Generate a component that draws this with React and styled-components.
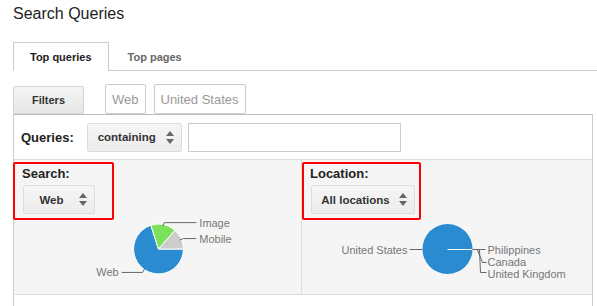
import React from 'react';
import styled, { createGlobalStyle } from 'styled-components';

const GlobalStyle = createGlobalStyle`
    body {
        margin: 0;
        background: #fff;
        font-family: "Liberation Sans", Arial, sans-serif;
        color: #222;
    }
`

function SelectArrows() {
    return (
        <svg width="8" height="13" viewBox="0 0 8 13">
            <polygon points="0,5 4,0 8,5" fill="#666" />
            <polygon points="0,8 8,8 4,13" fill="#666" />
        </svg>
    );
}

function Select({ text, width }) {
    return (
        <SelectBox $width={width}>
            <span>{text}</span>
            <SelectArrows />
        </SelectBox>
    );
}

function SearchPie() {
    // slices go clockwise from 3 o'clock: web (blue), image (green), mobile (gray)
    return (
        <Chart viewBox="0 0 288 74" height="74">
            <g stroke="#fff" strokeWidth="1">
                <path d="M145 29 L170 29 A25 25 0 1 1 137.3 5.2 Z" fill="#2a8bd0" />
                <path d="M145 29 L137.3 5.2 A25 25 0 0 1 161.5 10.3 Z" fill="#7be15b" />
                <path d="M145 29 L161.5 10.3 A25 25 0 0 1 170 29 Z" fill="#cccccc" />
            </g>
            <g stroke="#666" strokeWidth="1" fill="none">
                <polyline points="149,6 151,2.5 183,2.5" />
                <polyline points="166,20 170,18.5 183,18.5" />
                <polyline points="108,52.5 129,52.5 131,49" />
            </g>
            <g fill="#777" fontSize="11">
                <text x="186" y="6.5">Image</text>
                <text x="186" y="22.5">Mobile</text>
                <text x="105" y="56.5" textAnchor="end">Web</text>
            </g>
        </Chart>
    );
}

function LocationPie() {
    return (
        <Chart viewBox="0 0 289 74" height="74">
            <circle cx="145" cy="29" r="25" fill="#2a8bd0" />
            <line x1="145" y1="29.5" x2="170" y2="29.5" stroke="#fff" strokeWidth="1" />
            <g stroke="#666" strokeWidth="1" fill="none">
                <polyline points="107,29.5 120,29.5" />
                <polyline points="170,29.5 183,29.5" />
                <polyline points="175,30 180,42.5 184,42.5" />
                <polyline points="177,30 178,52.5 184,52.5" />
            </g>
            <g fill="#777" fontSize="11">
                <text x="105" y="33.5" textAnchor="end">United States</text>
                <text x="185" y="33.5">Philippines</text>
                <text x="185" y="45.5">Canada</text>
                <text x="185" y="57.5">United Kingdom</text>
            </g>
        </Chart>
    );
}

export default function App() {
    return (
        <Page>
            <GlobalStyle />
            <Title>Search Queries</Title>
            <Tabs>
                <Tab $active>Top queries</Tab>
                <Tab>Top pages</Tab>
            </Tabs>
            <Toolbar>
                <FiltersButton>Filters</FiltersButton>
                <Chip $gap={21}>Web</Chip>
                <Chip $gap={8}>United States</Chip>
            </Toolbar>
            <Panel>
                <QueriesRow>
                    <RowLabel>Queries:</RowLabel>
                    <Select text="containing" width={95} />
                    <TextField />
                </QueriesRow>
                <Columns>
                    <Column $divider>
                        <Highlight $width={101} $inset={7} $pull={1}>
                            <FieldLabel>Search:</FieldLabel>
                            <Select text="Web" width={72} />
                        </Highlight>
                        <SearchPie />
                    </Column>
                    <Column>
                        <Highlight $width={119} $inset={6}>
                            <FieldLabel>Location:</FieldLabel>
                            <Select text="All locations" width={104} />
                        </Highlight>
                        <LocationPie />
                    </Column>
                </Columns>
            </Panel>
        </Page>
    );
}

const Page = styled.div`
    padding-left: 13px;
    height: 306px;
    overflow: hidden;
`

const Title = styled.h1`
    margin: 4px 0 0;
    font-size: 16px;
    font-weight: normal;
    line-height: 20px;
    color: #222;
`

const Tabs = styled.div`
    display: flex;
    margin-top: 18px;
    height: 28px;
    border-bottom: 1px solid #ccc;
`

const Tab = styled.div`
    box-sizing: border-box;
    display: flex;
    align-items: center;
    height: ${p => p.$active ? '29px' : '28px'};
    padding: 0 16px;
    margin-left: ${p => p.$active ? '0' : '2px'};
    font-size: 11px;
    font-weight: bold;
    color: ${p => p.$active ? '#222' : '#666'};
    background: #fff;
    border: 1px solid ${p => p.$active ? '#ccc' : 'transparent'};
    border-bottom: none;
`

const Toolbar = styled.div`
    display: flex;
    align-items: flex-end;
    margin-top: 13px;
    height: 30px;
`

const FiltersButton = styled.div`
    box-sizing: border-box;
    display: flex;
    align-items: center;
    justify-content: center;
    width: 71px;
    height: 28px;
    font-size: 11px;
    font-weight: bold;
    color: #333;
    background: linear-gradient(#f5f5f5, #e6e6e6);
    border: 1px solid #d4d4d4;
    border-radius: 2px;
`

const Chip = styled.div`
    box-sizing: border-box;
    display: flex;
    align-items: center;
    height: 30px;
    padding: 0 6px;
    margin-left: ${p => p.$gap}px;
    font-size: 13px;
    color: #999;
    border: 1px solid #ccc;
    border-radius: 2px;
`

const Panel = styled.div`
    width: 578px;
    border: 1px solid #ccc;
    border-top-color: #bbb;
    border-bottom: none;
    height: 200px;
`

const QueriesRow = styled.div`
    display: flex;
    align-items: center;
    height: 44px;
    padding-left: 7px;
    border-bottom: 1px solid #ddd;
`

const RowLabel = styled.span`
    font-size: 13px;
    font-weight: bold;
    color: #222;
    margin-right: 13px;
`

const SelectBox = styled.div`
    box-sizing: border-box;
    display: flex;
    align-items: center;
    width: ${p => p.$width}px;
    height: 29px;
    padding: 0 7px 0 4px;
    font-size: 11.5px;
    font-weight: bold;
    color: #333;
    background: linear-gradient(#f6f6f6, #ececec);
    border: 1px solid #dcdcdc;
    border-radius: 2px;

    span {
        flex: 1;
        text-align: center;
    }

    svg {
        margin-left: 4px;
        flex: none;
    }
`

const TextField = styled.div`
    box-sizing: border-box;
    width: 213px;
    height: 29px;
    margin-left: 6px;
    background: #fff;
    border: 1px solid #ccc;
`

const Columns = styled.div`
    display: grid;
    grid-template-columns: 288px 290px;
    height: 134px;
    background: #f5f5f5;
    border-bottom: 1px solid #ddd;
`

const Column = styled.div`
    display: flex;
    flex-direction: column;
    border-right: ${p => p.$divider ? '1px solid #ddd' : 'none'};
    min-width: 0;
`

const Highlight = styled.div`
    box-sizing: border-box;
    width: ${p => p.$width}px;
    height: 58px;
    margin: 2px 0 0 ${p => p.$pull ? -p.$pull : 0}px;
    padding: 2px 0 0 ${p => p.$inset}px;
    border: 2px solid #f00;
    border-radius: 2px;

    ${SelectBox} {
        margin: 4px 0 0 1px;
    }
`

const FieldLabel = styled.div`
    font-size: 13px;
    font-weight: bold;
    line-height: 15px;
    color: #222;
`

const Chart = styled.svg`
    display: block;
    width: 100%;
    overflow: visible;
    font-family: "Liberation Sans", Arial, sans-serif;
`
